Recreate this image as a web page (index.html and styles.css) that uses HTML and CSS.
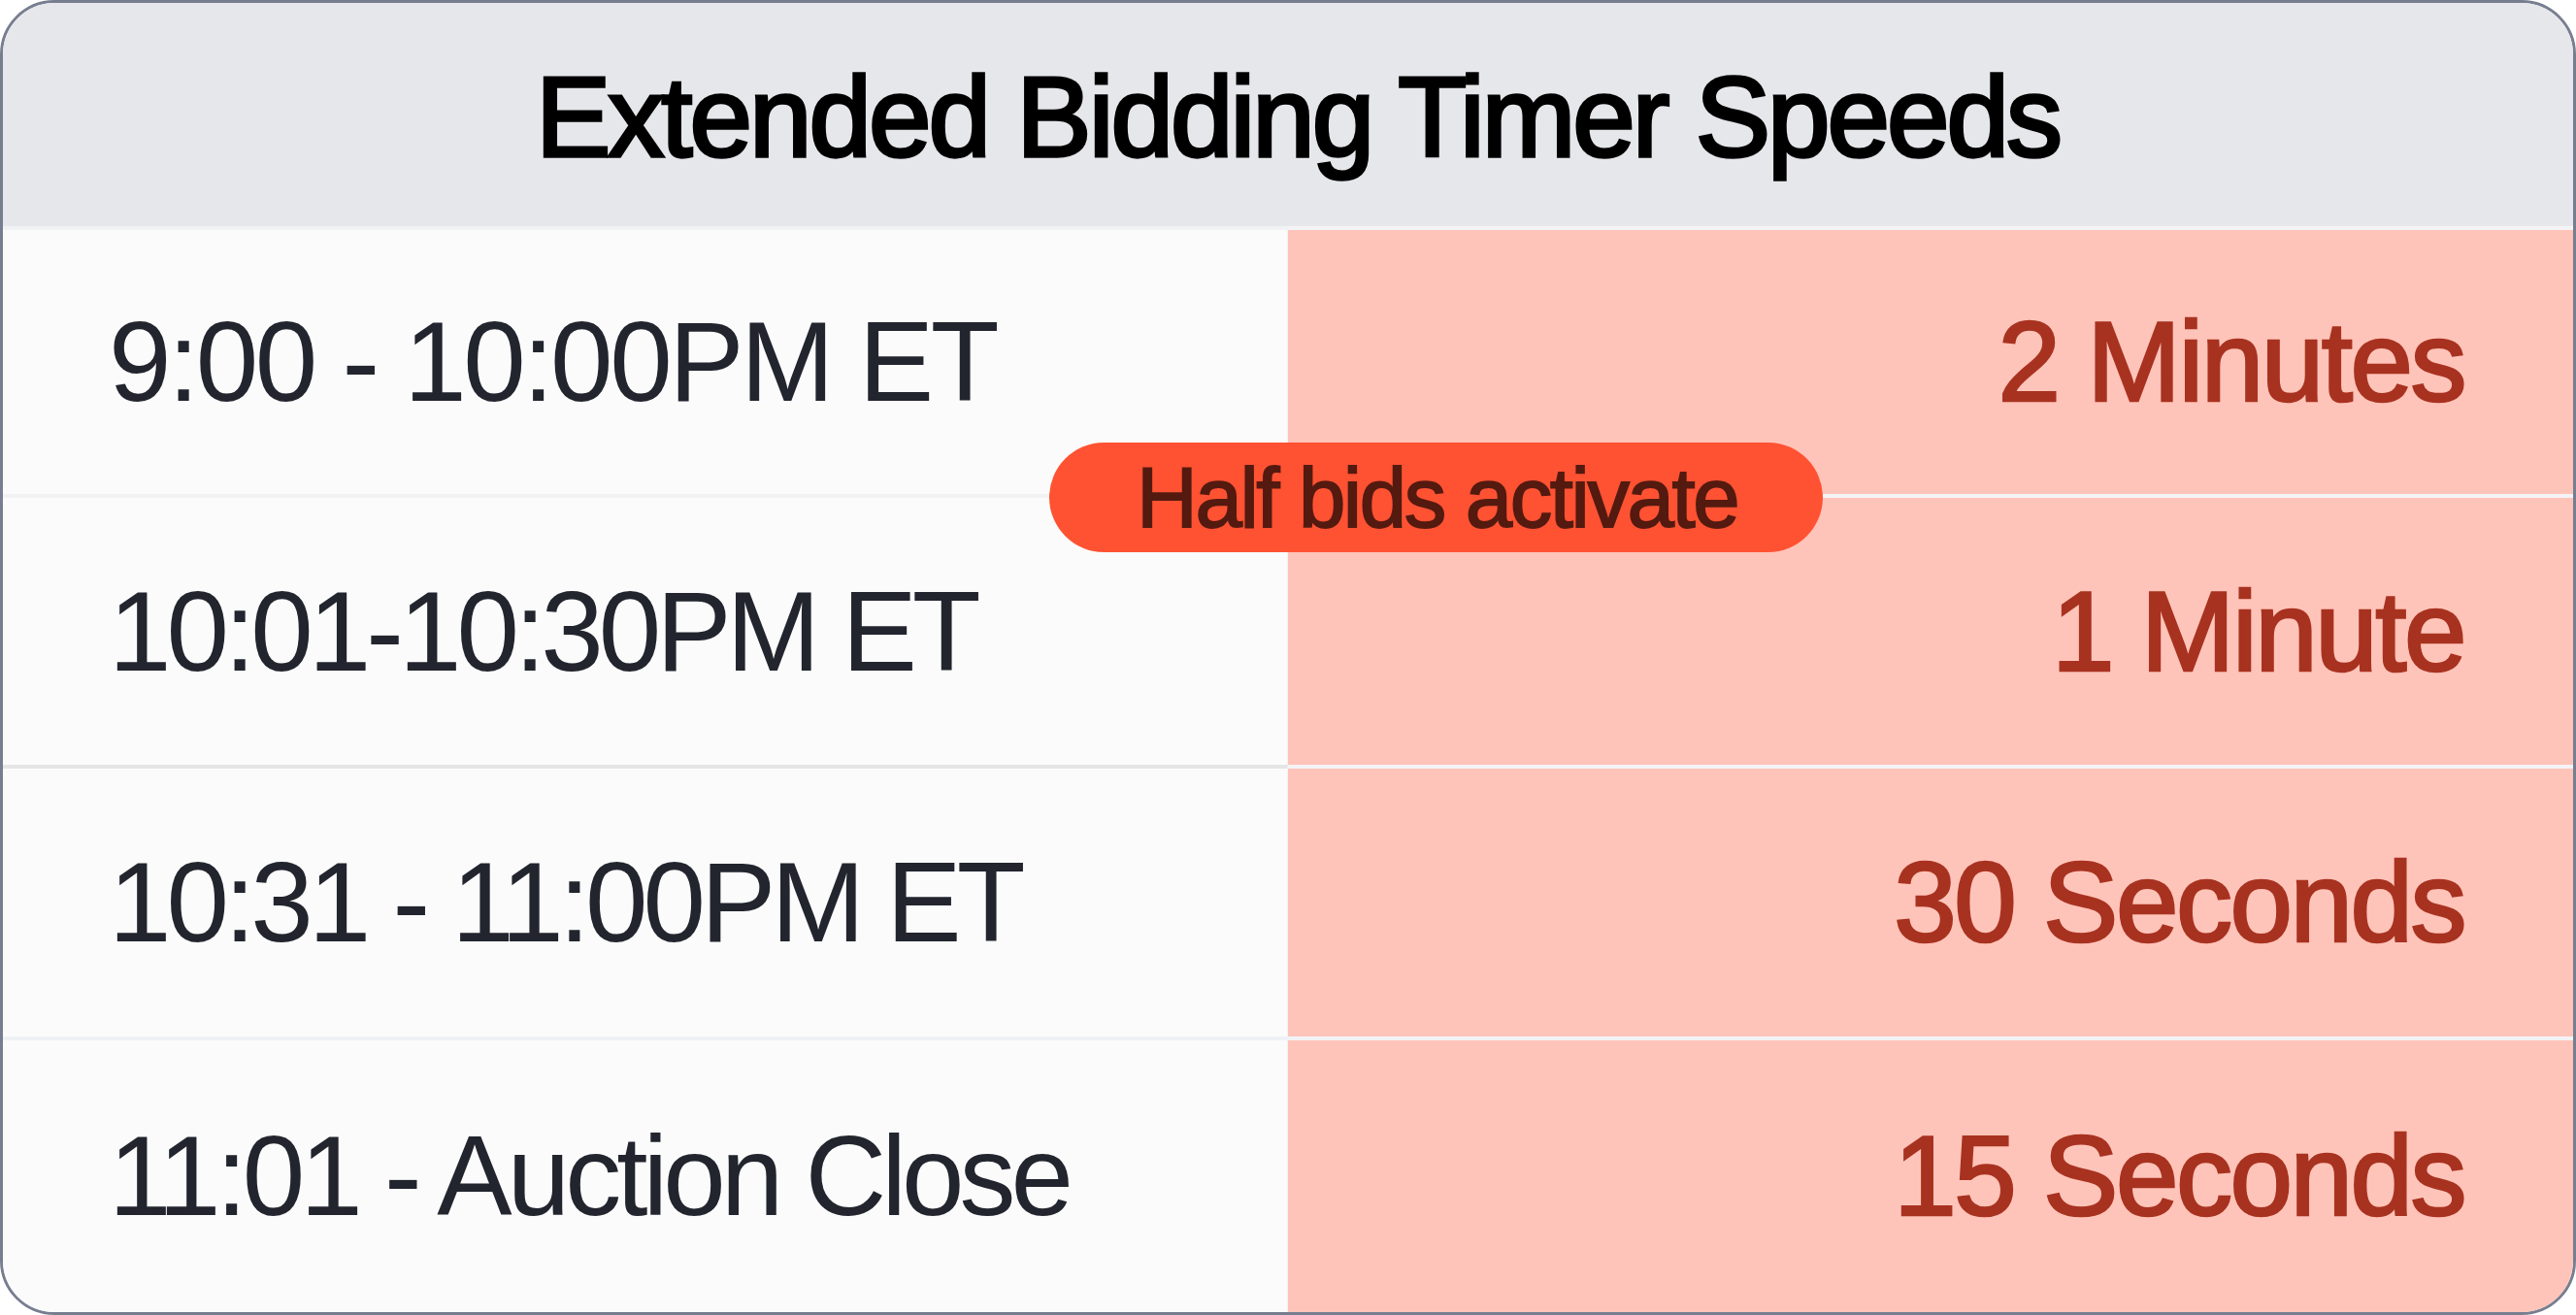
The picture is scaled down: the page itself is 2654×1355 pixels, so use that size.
FILE: index.html
```html
<!DOCTYPE html>
<html lang="en">
<head>
<meta charset="utf-8">
<title>Extended Bidding Timer Speeds</title>
<link rel="stylesheet" href="styles.css">
</head>
<body>
<div class="card">
  <div class="card-header">
    <h1 class="title">Extended Bidding Timer Speeds</h1>
  </div>
  <div class="row row-first">
    <div class="cell cell-time"><span class="time">9:00 - 10:00PM ET</span></div>
    <div class="cell cell-speed"><span class="speed">2 Minutes</span></div>
  </div>
  <div class="row row-second">
    <div class="cell cell-time"><span class="time time-tight">10:01-10:30PM ET</span></div>
    <div class="cell cell-speed"><span class="speed">1 Minute</span></div>
  </div>
  <div class="row row-third">
    <div class="cell cell-time"><span class="time time-tight">10:31 - 11:00PM ET</span></div>
    <div class="cell cell-speed"><span class="speed">30 Seconds</span></div>
  </div>
  <div class="row row-fourth">
    <div class="cell cell-time"><span class="time time-tight">11:01 - Auction Close</span></div>
    <div class="cell cell-speed"><span class="speed">15 Seconds</span></div>
  </div>
  <div class="badge">Half bids activate</div>
</div>
</body>
</html>
```

FILE: styles.css
```css
* {
  box-sizing: border-box;
}

html,
body {
  margin: 0;
  padding: 0;
  background: #ffffff;
}

body {
  font-family: "Liberation Sans", Arial, sans-serif;
}

.card {
  position: relative;
  width: 2654px;
  height: 1355px;
  border: 3px solid #777e8f;
  border-radius: 56px;
  overflow: hidden;
  display: grid;
  grid-template-rows: 230px 276px 279px 280px 1fr;
  background: #fbfbfb;
}

.card-header {
  background: #e6e7eb;
  display: flex;
  align-items: center;
  justify-content: center;
  padding-left: 20px;
}

.title {
  margin: 0;
  font-size: 116px;
  font-weight: 400;
  line-height: 1;
  letter-spacing: -3px;
  color: #000000;
  -webkit-text-stroke: 3.4px #000000;
  padding-top: 6px;
}

.row {
  display: grid;
  grid-template-columns: 1fr 1fr;
}

.cell {
  display: flex;
  align-items: center;
  border-top: 4px solid #f1f2f4;
}

.cell-time {
  background: #fbfbfb;
  padding-left: 109px;
  border-right: 1px solid #f3f3f3;
}

.cell-speed {
  background: #ffc4b9;
  justify-content: flex-end;
  padding-right: 112px;
  border-top-color: #f4f3f6;
}

.row-third .cell-time {
  border-top-color: #e5e5e5;
}

.row-fourth .cell {
  border-top-color: #eff2f5;
}

.row-fourth .cell-speed {
  border-top-color: #f1f3f6;
}

.time {
  font-size: 116px;
  line-height: 1;
  letter-spacing: -3.5px;
  color: #22252e;
  white-space: nowrap;
}

.time-tight {
  letter-spacing: -5px;
}

.speed {
  font-size: 116px;
  line-height: 1;
  letter-spacing: -2.5px;
  color: #a83220;
  -webkit-text-stroke: 2.6px #a83220;
  white-space: nowrap;
}

.badge {
  position: absolute;
  left: 1078px;
  top: 453px;
  height: 113px;
  padding: 0 88px 0 90px;
  border-radius: 57px;
  background: #ff5232;
  color: #541a10;
  font-size: 87px;
  line-height: 1;
  letter-spacing: -2.4px;
  -webkit-text-stroke: 1.8px #541a10;
  display: flex;
  align-items: center;
  white-space: nowrap;
}
```
